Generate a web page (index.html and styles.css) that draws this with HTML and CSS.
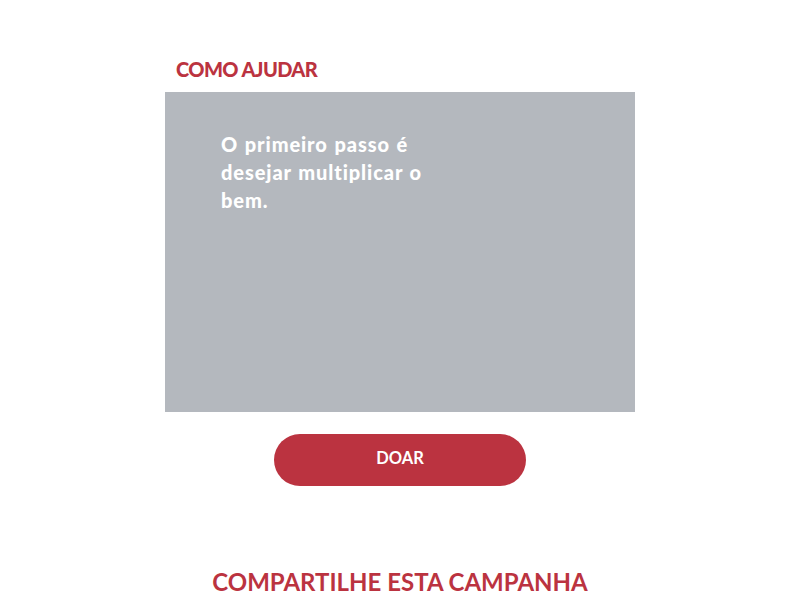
FILE: index.html
```html
<!DOCTYPE html>
<html lang="pt">
<head>
<meta charset="utf-8">
<link rel="stylesheet" href="styles.css">
</head>
<body>
<main class="page">
  <section class="help">
    <h2 class="help-title">COMO AJUDAR</h2>
    <div class="help-card">
      <p class="help-text">O primeiro passo é desejar multiplicar o bem.</p>
    </div>
    <div class="actions">
      <a class="btn-donate" href="#">DOAR</a>
    </div>
  </section>
  <h2 class="share-title">COMPARTILHE ESTA CAMPANHA</h2>
</main>
</body>
</html>
```
FILE: styles.css
```css
html, body {
  margin: 0;
  padding: 0;
  background: #ffffff;
}
body {
  font-family: Lato, "Open Sans", "Liberation Sans", sans-serif;
}
.page {
  width: 470px;
  margin: 0 auto;
  padding-top: 57px;
}
.help-title {
  margin: 0 0 10px 11px;
  font-size: 20px;
  line-height: 25px;
  font-weight: 900;
  color: #bb3340;
  letter-spacing: -0.6px;
}
.help-card {
  height: 320px;
  background: #b4b8be;
  box-sizing: border-box;
  padding: 38px 0 0 56px;
}
.help-text {
  margin: 0;
  width: 215px;
  color: #ffffff;
  font-size: 20px;
  line-height: 28px;
  font-weight: 900;
  letter-spacing: 0.9px;
  word-spacing: 1px;
}
.actions {
  display: flex;
  justify-content: center;
  padding-top: 22px;
}
.btn-donate {
  display: flex;
  align-items: center;
  justify-content: center;
  box-sizing: border-box;
  width: 252px;
  height: 52px;
  padding-bottom: 5px;
  border-radius: 26px;
  background: #bb3340;
  color: #ffffff;
  text-decoration: none;
  font-size: 16.5px;
  font-weight: 700;
}
.share-title {
  margin: 81px -100px 0;
  text-align: center;
  font-size: 24px;
  line-height: 30px;
  font-weight: 700;
  color: #bb3340;
}
```
